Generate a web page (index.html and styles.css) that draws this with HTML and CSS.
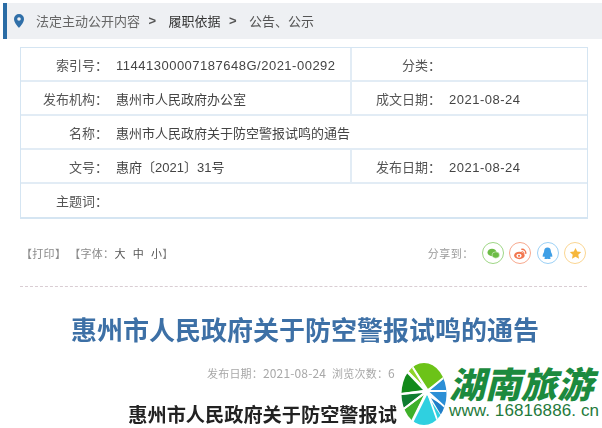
FILE: index.html
```html
<!DOCTYPE html>
<html lang="zh-CN">
<head>
<meta charset="utf-8">
<title>惠州市人民政府关于防空警报试鸣的通告</title>
<link rel="stylesheet" href="styles.css">
</head>
<body>
<main class="page">
  <nav class="crumbs">
    <svg class="pin" viewBox="0 0 12 14" width="12" height="14"><path fill="#2f6fa8" fill-rule="evenodd" d="M6 0a5 5 0 0 1 5 5c0 3.300-3.200 6.800-5 9-1.800-2.200-5-5.700-5-9a5 5 0 0 1 5-5zm0 3.200a1.800 1.800 0 1 0 0 3.600 1.800 1.800 0 0 0 0-3.600z"/></svg>
    <span class="crumb-muted">法定主动公开内容</span>
    <span class="sep">&gt;</span>
    <span class="crumb">履职依据</span>
    <span class="sep">&gt;</span>
    <span class="crumb">公告、公示</span>
  </nav>

  <section class="meta-table">
    <div class="row">
      <div class="cell main"><span class="label">索引号：</span><span class="value num">11441300007187648G/2021-00292</span></div>
      <div class="cell side"><span class="label side-label">分类：</span><span class="value"></span></div>
    </div>
    <div class="row">
      <div class="cell main"><span class="label">发布机构：</span><span class="value">惠州市人民政府办公室</span></div>
      <div class="cell side"><span class="label side-label">成文日期：</span><span class="value num">2021-08-24</span></div>
    </div>
    <div class="row">
      <div class="cell wide"><span class="label">名称：</span><span class="value">惠州市人民政府关于防空警报试鸣的通告</span></div>
    </div>
    <div class="row">
      <div class="cell main"><span class="label">文号：</span><span class="value">惠府〔2021〕31号</span></div>
      <div class="cell side"><span class="label side-label">发布日期：</span><span class="value num">2021-08-24</span></div>
    </div>
    <div class="row">
      <div class="cell wide"><span class="label">主题词：</span><span class="value"></span></div>
    </div>
  </section>

  <div class="tools">
    <div class="tools-left">
      <span>【打印】</span>
      <span>【字体：<b class="fs">大</b><b class="fs">中</b><b class="fs">小</b>】</span>
    </div>
    <div class="share">
      <span class="share-label">分享到：</span>
      <span class="ico ico-wx"><svg viewBox="0 0 20 20" width="20" height="20"><ellipse cx="8" cy="8.500" rx="6" ry="5" fill="#6cbb45"/><ellipse cx="13" cy="12" rx="5" ry="4.200" fill="#6cbb45" stroke="#f2f9ee" stroke-width=".7"/></svg></span>
      <span class="ico ico-wb"><svg viewBox="0 0 20 20" width="20" height="20"><ellipse cx="8.500" cy="12.500" rx="7" ry="5" fill="#f2764e"/><ellipse cx="8" cy="13" rx="3.500" ry="2.600" fill="#fff"/><circle cx="8" cy="13" r="1.500" fill="#f2764e"/><path d="M11 4.500a5 5 0 0 1 6 6" fill="none" stroke="#f2764e" stroke-width="1.800"/><path d="M11.500 7.500a2.400 2.400 0 0 1 3 3" fill="none" stroke="#f2764e" stroke-width="1.300"/></svg></span>
      <span class="ico ico-qq"><svg viewBox="0 0 20 20" width="20" height="20"><path fill="#3f9fe6" d="M10 2c3 0 4.500 2.300 4.500 5 0 1 .4 1.600 1 2.800.9 1.800 1.300 4.200.6 4.700-.5.300-1-.4-1.500-1.200-.2 1-.6 1.800-1.300 2.400.9.400 1.200 1 .6 1.400-.9.500-3 .5-3.900 0-.9.500-3 .5-3.900 0-.6-.4-.3-1 .6-1.400-.7-.6-1.100-1.400-1.300-2.400-.5.800-1 1.500-1.500 1.200-.7-.5-.3-2.900.6-4.700.6-1.200 1-1.800 1-2.800C5.500 4.300 7 2 10 2z"/></svg></span>
      <span class="ico ico-st"><svg viewBox="0 0 20 20" width="20" height="20"><path fill="#f6b73c" d="M10 2.500l2.300 4.900 5.300.7-3.900 3.600 1 5.300-4.700-2.600-4.700 2.600 1-5.300L2.400 8.100l5.300-.7z"/></svg></span>
    </div>
  </div>

  <div class="dashed"></div>

  <h1 class="title">惠州市人民政府关于防空警报试鸣的通告</h1>
  <p class="pubinfo">发布日期：<span class="pubnum">2021-08-24</span>浏览次数：<span class="pubnum">6</span></p>
  <h2 class="subtitle">惠州市人民政府关于防空警报试鸣的通告</h2>
</main>

<aside class="mark">
  <svg class="mark-logo" viewBox="0 0 46 62" width="46" height="62">
    <defs><clipPath id="disc"><ellipse cx="23" cy="31" rx="22.500" ry="31"/></clipPath></defs>
    <g clip-path="url(#disc)">
      <rect width="46" height="62" fill="#fff"/>
      <path fill="#6cc318" d="M10 0h36v14L27 26z"/>
      <path fill="#8fd42a" d="M0 0h10l13 25z"/>
      <path fill="#128a1a" d="M0 4l22 23L0 30z"/>
      <path fill="#0f7d30" d="M0 32l22-2L0 47z"/>
      <path fill="#3fb02a" d="M0 49l23-17L9 62H0z"/>
      <path fill="#2fd0e0" d="M11 62l15-30 20 30z"/>
      <path fill="#2c8fd6" d="M46 13v32L27 29z"/>
      <path fill="#1f7fc8" d="M46 45v17L30 35z"/>
      <path stroke="#fff" stroke-width="1.800" fill="none" d="M26 28L9 0M26 28L46 12M26 28L46 28M26 28L0 2M26 28L0 31M26 28L0 48M26 28L9 62M26 28L46 46M26 28l12 34"/>
    </g>
  </svg>
  <div class="mark-text">
    <div class="mark-cn">湖南旅游</div>
    <div class="mark-url">www. 16816886. cn</div>
  </div>
</aside>
</body>
</html>
```

FILE: styles.css
```css
* { box-sizing: border-box; }
html, body { margin: 0; padding: 0; }
body {
  width: 602px;
  height: 428px;
  overflow: hidden;
  position: relative;
  background: #fff;
  font-family: "Noto Sans CJK SC", "Liberation Sans", sans-serif;
  color: #444;
}
.page {
  padding-top: 3px;
  filter: blur(0.45px);
}
.crumbs {
  margin-left: 3px;
  height: 36px;
  display: flex;
  align-items: center;
  background: #eef0f3;
  border-left: 4px solid #2a6ca5;
  font-size: 13px;
  line-height: 18px;
}
.pin { margin-left: 6px; margin-right: 11px; flex: none; }
.crumb-muted { color: #666; }
.crumb { color: #333; }
.sep { width: 28.5px; padding-right: 4px; text-align: center; font-family: "Liberation Sans", sans-serif; font-size: 13px; font-weight: 700; color: #555; }
.crumbs .crumb:last-child { color: #555; }

.meta-table {
  margin: 8px 0 0 20px;
  width: 568px;
  border: 1px solid #d5e5f2;
  border-bottom-width: 2px;
  font-size: 13px;
}
.row {
  display: flex;
  height: 34px;
  border-bottom: 2px solid #e2ecf5;
}
.row:last-child { border-bottom: 0; height: 33px; }
.cell { display: flex; align-items: baseline; padding-top: 8px; line-height: 18px; }
.main { width: 331px; border-right: 2px solid #e2ecf5; }
.side { flex: 1; }
.wide { flex: 1; }
.label { width: 87px; text-align: right; color: #555; flex: none; }
.side-label { width: 89px; }
.value { margin-left: 8px; color: #444; font-family: "Liberation Sans", "Noto Sans CJK SC", sans-serif; white-space: nowrap; }
.num { letter-spacing: .5px; }

.tools {
  margin: 20px 16px 0 22px;
  height: 28px;
  display: flex;
  align-items: center;
  justify-content: space-between;
  font-size: 11px;
  color: #8b8b8b;
}
.tools-left { display: flex; gap: 3px; margin-left: -1px; letter-spacing: .3px; }
.fs { font-weight: 400; color: #555; margin-right: 7px; }
.fs:last-of-type { margin-right: 0; }
.share { display: flex; align-items: center; gap: 5.3px; }
.share-label { margin-right: 3px; color: #999; letter-spacing: .5px; }
.ico {
  width: 22px;
  height: 22px;
  border-radius: 50%;
  border: 1px solid;
  display: flex;
  align-items: center;
  justify-content: center;
}
.ico svg { width: 15px; height: 15px; }
.ico-wx { border-color: #9ed685; }
.ico-wb { border-color: #f7a88d; }
.ico-qq { border-color: #9bd0f5; }
.ico-st { border-color: #fad591; }

.dashed {
  margin: 19px 15px 0 20px;
  border-top: 1px dashed #d9cdd3;
}
.title {
  margin: 13px 0 0;
  padding-left: 8px;
  text-align: center;
  font-size: 26px;
  line-height: 58px;
  height: 58px;
  font-weight: 700;
  color: #3d70a6;
  white-space: nowrap;
}
.pubinfo {
  margin: 6px 0 0;
  padding-left: 207px;
  font-size: 11px;
  letter-spacing: .2px;
  line-height: 18px;
  color: #a8a8a8;
  white-space: nowrap;
}
.pubnum { font-size: 12px; letter-spacing: .15px; margin-right: 6px; }
.pubnum:last-child { margin-right: 0; }
.subtitle {
  margin: 18px 0 0;
  text-align: center;
  font-size: 19.2px;
  line-height: 28px;
  font-weight: 700;
  color: #222;
  white-space: nowrap;
}

.mark {
  position: absolute;
  left: 397px;
  top: 363px;
  display: flex;
  width: 205px;
  height: 62px;
  padding-left: 4px;
  background: #fff;
}
.mark-logo { flex: none; }
.mark-text { margin-left: 2px; }
.mark-cn {
  font-family: "Noto Sans CJK SC", sans-serif;
  font-size: 36px;
  line-height: 39px;
  font-weight: 900;
  font-style: italic;
  color: #1c8a3e;
  white-space: nowrap;
}
.mark-url {
  font-family: "Liberation Sans", sans-serif;
  font-size: 17px;
  line-height: 18px;
  color: #1f7a3c;
  letter-spacing: .1px;
  white-space: nowrap;
}
```
